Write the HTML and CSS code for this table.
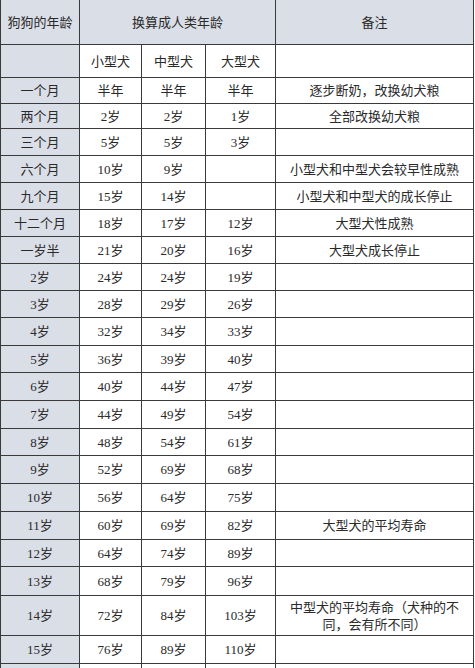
FILE: index.html
```html
<!DOCTYPE html>
<html lang="zh">
<head>
<meta charset="utf-8">
<title>狗狗年龄换算</title>
<link rel="stylesheet" href="styles.css">
</head>
<body>
<div class="grid">
  <div class="c g">狗狗的年龄</div>
  <div class="c g span3">换算成人类年龄</div>
  <div class="c g">备注</div>

  <div class="c g"></div>
  <div class="c">小型犬</div>
  <div class="c">中型犬</div>
  <div class="c">大型犬</div>
  <div class="c"></div>

  <div class="c g">一个月</div><div class="c">半年</div><div class="c">半年</div><div class="c">半年</div><div class="c">逐步断奶，改换幼犬粮</div>
  <div class="c g">两个月</div><div class="c">2岁</div><div class="c">2岁</div><div class="c">1岁</div><div class="c">全部改换幼犬粮</div>
  <div class="c g">三个月</div><div class="c">5岁</div><div class="c">5岁</div><div class="c">3岁</div><div class="c"></div>
  <div class="c g">六个月</div><div class="c">10岁</div><div class="c">9岁</div><div class="c"></div><div class="c">小型犬和中型犬会较早性成熟</div>
  <div class="c g">九个月</div><div class="c">15岁</div><div class="c">14岁</div><div class="c"></div><div class="c">小型犬和中型犬的成长停止</div>
  <div class="c g">十二个月</div><div class="c">18岁</div><div class="c">17岁</div><div class="c">12岁</div><div class="c">大型犬性成熟</div>
  <div class="c g">一岁半</div><div class="c">21岁</div><div class="c">20岁</div><div class="c">16岁</div><div class="c">大型犬成长停止</div>
  <div class="c g">2岁</div><div class="c">24岁</div><div class="c">24岁</div><div class="c">19岁</div><div class="c"></div>
  <div class="c g">3岁</div><div class="c">28岁</div><div class="c">29岁</div><div class="c">26岁</div><div class="c"></div>
  <div class="c g">4岁</div><div class="c">32岁</div><div class="c">34岁</div><div class="c">33岁</div><div class="c"></div>
  <div class="c g">5岁</div><div class="c">36岁</div><div class="c">39岁</div><div class="c">40岁</div><div class="c"></div>
  <div class="c g">6岁</div><div class="c">40岁</div><div class="c">44岁</div><div class="c">47岁</div><div class="c"></div>
  <div class="c g">7岁</div><div class="c">44岁</div><div class="c">49岁</div><div class="c">54岁</div><div class="c"></div>
  <div class="c g">8岁</div><div class="c">48岁</div><div class="c">54岁</div><div class="c">61岁</div><div class="c"></div>
  <div class="c g">9岁</div><div class="c">52岁</div><div class="c">69岁</div><div class="c">68岁</div><div class="c"></div>
  <div class="c g">10岁</div><div class="c">56岁</div><div class="c">64岁</div><div class="c">75岁</div><div class="c"></div>
  <div class="c g">11岁</div><div class="c">60岁</div><div class="c">69岁</div><div class="c">82岁</div><div class="c">大型犬的平均寿命</div>
  <div class="c g">12岁</div><div class="c">64岁</div><div class="c">74岁</div><div class="c">89岁</div><div class="c"></div>
  <div class="c g">13岁</div><div class="c">68岁</div><div class="c">79岁</div><div class="c">96岁</div><div class="c"></div>
  <div class="c g">14岁</div><div class="c">72岁</div><div class="c">84岁</div><div class="c">103岁</div><div class="c">中型犬的平均寿命（犬种的不<br>同，会有所不同）</div>
  <div class="c g">15岁</div><div class="c">76岁</div><div class="c">89岁</div><div class="c">110岁</div><div class="c"></div>
  <div class="c g"></div><div class="c"></div><div class="c"></div><div class="c"></div><div class="c"></div>
</div>
</body>
</html>
```
FILE: styles.css
```css
html, body {
  margin: 0;
  padding: 0;
  background: #ffffff;
}

.grid {
  display: grid;
  width: 474px;
  grid-template-columns: 78px 61px 63px 69px 197px;
  grid-template-rows: 44px 32px 25px 24px 26px 26px 26px 26px 26px 26px 26px 27px 26px 27px 27px 26px 27px 27px 27px 26px 28px 39px 27px 28px;
  gap: 1px;
  padding: 0 1px 1px 1px;
  box-sizing: border-box;
  background: #3a3a3a;
  font-family: "Liberation Serif", "Noto Sans CJK SC", serif;
  font-size: 13px;
  color: #2a2a2a;
}

.c {
  background: #ffffff;
  display: flex;
  align-items: center;
  justify-content: center;
  text-align: center;
  line-height: 17px;
}

.g {
  background: #dadee7;
}

.span3 {
  grid-column: span 3;
}
```
